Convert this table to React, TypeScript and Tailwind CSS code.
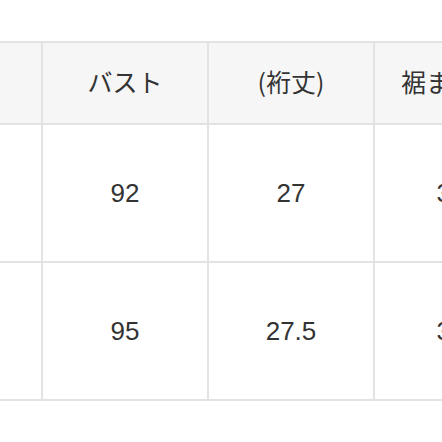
import React from 'react'

const headers = ['着丈', 'バスト', '(裄丈)', '裾まわり', '袖丈']
const rows = [
  ['S', '92', '27', '34', '40'],
  ['M', '95', '27.5', '35', '41'],
]

export default function App() {
  return (
    <div
      className="w-[442px] h-[442px] overflow-hidden bg-white pt-[41px]"
      style={{ fontFamily: '"Liberation Sans", "Noto Sans CJK JP", sans-serif' }}
    >
      <div className="ml-[-125px] w-max grid grid-cols-[164px_164px_164px_152px_164px] grid-rows-[80px_136px_136px] gap-[2px] p-[2px] bg-[#e3e3e3]">
        {headers.map((h) => (
          <div
            key={h}
            className="bg-[#f6f6f6] flex items-center justify-center text-[25px] text-[#333] pb-[3px]"
            style={{ fontFamily: '"Noto Sans CJK JP", "Liberation Sans", sans-serif' }}
          >
            {h}
          </div>
        ))}
        {rows.map((r, i) =>
          r.map((v, j) => (
            <div
              key={`${i}-${j}`}
              className="bg-white flex items-center justify-center text-[26px] text-[#333]"
            >
              {v}
            </div>
          ))
        )}
      </div>
    </div>
  )
}
